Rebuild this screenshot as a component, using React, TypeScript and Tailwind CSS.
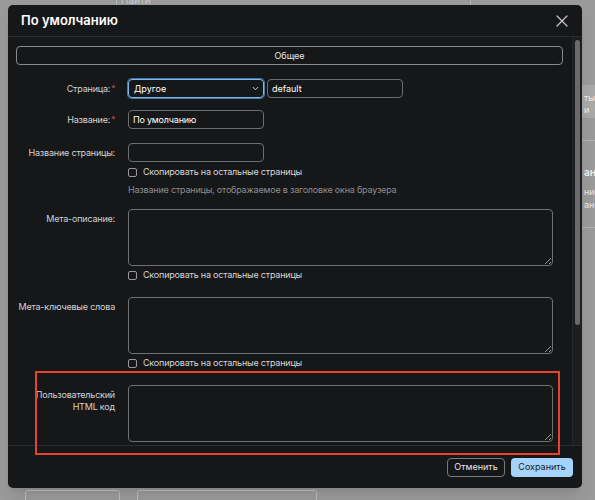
import React from "react";

const font = { fontFamily: "Inter, 'Noto Sans', sans-serif" };

function Req() {
  return <span className="text-[#e5484d] text-[8px] align-top ml-[1px] relative top-[-1px]">*</span>;
}

function Checkbox({ label }: { label: string }) {
  return (
    <div className="flex items-center h-[12px] gap-[6px]">
      <span className="w-[9px] h-[9px] rounded-[2px] border border-[#9a9a9a]" />
      <span className="text-[9px] tracking-[-0.2px] text-[#d6d6d6] leading-[12px]">{label}</span>
    </div>
  );
}

function Row({ label, children, className = "" }: { label: React.ReactNode; children: React.ReactNode; className?: string }) {
  return (
    <div className={"flex items-start " + className}>
      <div className="w-[101px] shrink-0 pr-[2px] pt-[4px] text-right text-[9px] tracking-[-0.2px] leading-[12px] text-[#d4d4d4] whitespace-nowrap flex justify-end">
        <span>{label}</span>
      </div>
      <div className="ml-[11px] flex-1 flex flex-col">{children}</div>
    </div>
  );
}

function TextArea() {
  return (
    <textarea
      readOnly
      className="w-[425px] h-[57px] rounded-[4px] border border-[#707070] bg-[#161719] outline-none resize"
    />
  );
}

export default function App() {
  return (
    <div style={font} className="relative w-[595px] h-[500px] overflow-hidden bg-[#9a9a9a]">
      {/* background page */}
      <div className="absolute left-[116px] top-0 w-px h-[6px] bg-[#b5b5b5]" />
      <div className="absolute left-[121px] top-[-7px] text-[10px] text-[#c8c8c8]">Найти</div>
      <div className="absolute left-[470px] top-0 w-px h-[6px] bg-[#b5b5b5]" />
      <div className="absolute left-[582px] top-[85px] w-[13px] h-[33px] bg-[#a8a8a8]" />
      <div className="absolute left-[584px] top-[92px] text-[9px] leading-[12px] text-[#eeeeee]">ты<br />и</div>
      <div className="absolute left-[582px] top-[140px] w-[13px] h-px bg-[#b0b0b0]" />
      <div className="absolute left-[584px] top-[165px] text-[10px] font-semibold text-[#f0f0f0]">ани</div>
      <div className="absolute left-[584px] top-[185px] text-[9px] leading-[13px] text-[#e8e8e8]">ниц<br />ани</div>
      <div className="absolute left-[582px] top-[227px] w-[13px] h-px bg-[#b0b0b0]" />
      <div className="absolute left-[25px] top-[490px] w-[95px] h-[20px] rounded-[3px] border border-[#bcbcbc]" />
      <div className="absolute left-[137px] top-[490px] w-[180px] h-[20px] rounded-[3px] border border-[#bcbcbc]" />

      {/* modal */}
      <div className="absolute left-[8px] top-[5px] w-[574px] h-[483px] rounded-[5px] bg-[#161719] flex flex-col overflow-hidden shadow-lg">
        <div className="h-[32px] shrink-0 flex items-center justify-between pl-[13px] pr-[14px] border-b border-[#2c2d30]">
          <span className="text-[13px] font-semibold text-white">По умолчанию</span>
          <svg width="12" height="12" viewBox="0 0 12 12" className="mt-[1px]">
            <path d="M1 1L11 11M11 1L1 11" stroke="#c9c9c9" strokeWidth="1.2" strokeLinecap="round" />
          </svg>
        </div>
        <div className="flex-1 flex min-h-0">
          <div className="flex-1 pl-[8px] pr-[9px] pt-[9px] flex flex-col">
            <div className="h-[19px] rounded-[4px] border border-[#8a8a8a] flex items-center justify-center text-[9px] text-[#e6e6e6]">
              Общее
            </div>
            <Row className="mt-[14px]" label={<>Страница:<Req /></>}>
              <div className="flex gap-[3px]">
                <div className="w-[136px] h-[19px] rounded-[4px] border border-[#7cb8ee] ring-1 ring-[#4a79a8] flex items-center justify-between pl-[5px] pr-[4px]">
                  <span className="text-[9px] text-white">Другое</span>
                  <svg width="7" height="5" viewBox="0 0 7 5">
                    <path d="M0.8 1L3.5 3.8L6.2 1" stroke="#cfcfcf" strokeWidth="1" fill="none" />
                  </svg>
                </div>
                <div className="w-[136px] h-[19px] rounded-[4px] border border-[#6e6e6e] flex items-center pl-[4px] text-[9px] text-white">default</div>
              </div>
            </Row>
            <Row className="mt-[12px]" label={<>Название:<Req /></>}>
              <div className="w-[136px] h-[19px] rounded-[4px] border border-[#6e6e6e] flex items-center pl-[4px] text-[9px] tracking-[-0.2px] text-white">По умолчанию</div>
            </Row>
            <Row className="mt-[14px]" label="Название страницы:">
              <div className="w-[136px] h-[19px] rounded-[4px] border border-[#6e6e6e]" />
              <div className="mt-[4px]"><Checkbox label="Скопировать на остальные страницы" /></div>
              <div className="mt-[6px] text-[9px] tracking-[-0.2px] leading-[12px] text-[#8e8e8e]">Название страницы, отображаемое в заголовке окна браузера</div>
            </Row>
            <Row className="mt-[13px]" label="Мета-описание:">
              <TextArea />
              <div className="mt-[3px]"><Checkbox label="Скопировать на остальные страницы" /></div>
            </Row>
            <Row className="mt-[16px]" label="Мета-ключевые слова">
              <TextArea />
              <div className="mt-[3px]"><Checkbox label="Скопировать на остальные страницы" /></div>
            </Row>
            <Row className="mt-[16px]" label={<>Пользовательский<br />HTML код</>}>
              <TextArea />
            </Row>
          </div>
          <div className="w-[10px] shrink-0 bg-[#1d1e20] border-l border-[#262729] relative">
            <div className="absolute left-[2px] top-[3px] w-[5px] h-[285px] rounded-full bg-[#6a6a6c]" />
          </div>
        </div>
        <div className="h-[43px] shrink-0 border-t border-[#2c2d30] flex items-center justify-end gap-[6px] pr-[9px]">
          <button className="w-[58px] h-[19px] rounded-[4px] border border-[#7a7a7a] text-[9px] text-[#e6e6e6]">Отменить</button>
          <button className="w-[62px] h-[19px] rounded-[4px] bg-[#a5d3fa] text-[9px] text-[#1b1b1b]">Сохранить</button>
        </div>
      </div>

      {/* annotation */}
      <div className="absolute left-[35px] top-[371px] w-[525px] h-[84px] border-2 border-[#e8432a]" />
    </div>
  );
}
